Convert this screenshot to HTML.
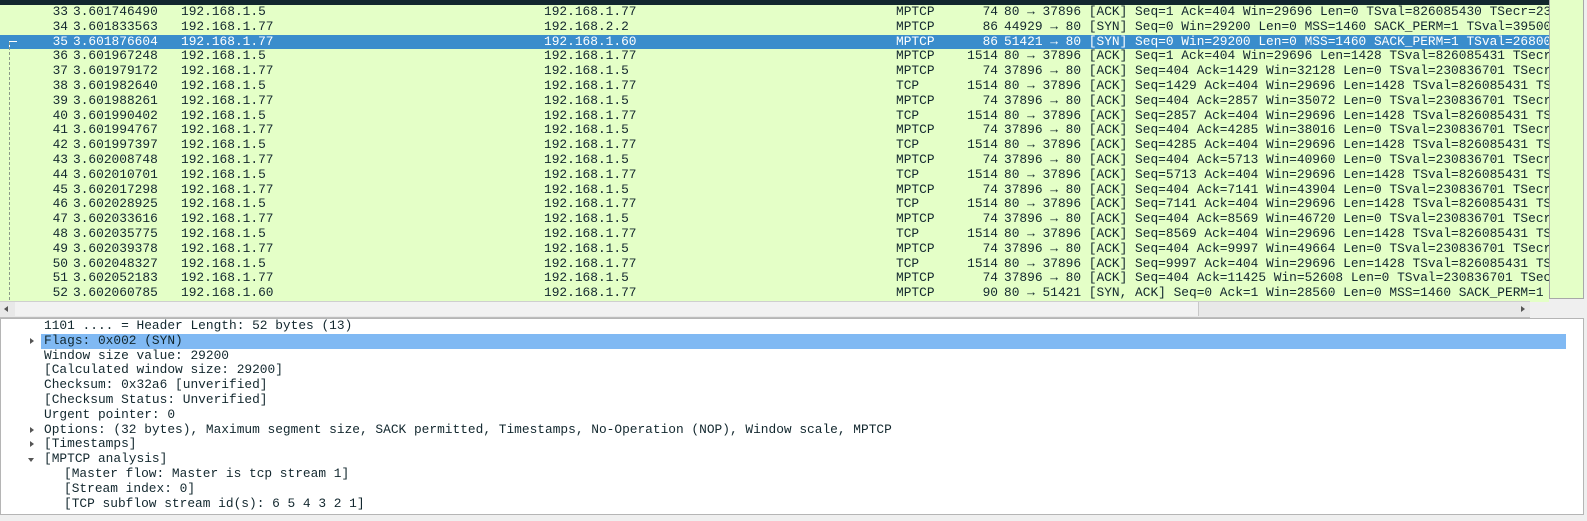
<!DOCTYPE html><html><head><style>
body{margin:0;width:1587px;height:521px;background:#efefef;position:relative;overflow:hidden;font-family:"Liberation Mono",monospace;font-size:12.85px;color:#12272e}
.top{position:absolute;left:0;top:0;width:1549px;height:302px;background:#e4ffc7;overflow:hidden}
.bar{position:absolute;left:0;top:0;width:1549px;height:5px;background:#12272e}
.r{position:absolute;left:0;width:1549px;height:14.8px;line-height:14.8px;white-space:pre}
.r span{position:absolute;top:0}
.sel{background:#3a8dcc;color:#fff}
.mini{position:absolute;left:1549px;top:0;width:33px;height:298px;background:#e4ffc7;border:1px solid #a8a8a8;border-top:none}
.hs{position:absolute;left:0;top:301px;width:1530px;height:15px;background:#e8e8e8;border-top:1px solid #cfcfcf;border-bottom:1px solid #bdbdbd}
.det{position:absolute;left:0;top:318px;width:1582px;height:195px;background:#fff;border:1px solid #b5b5b5}
.d{position:absolute;height:14.8px;line-height:14.8px;white-space:pre}
.tri{position:absolute;left:28px;width:0;height:0}
</style></head><body>
<div class="top">
<div class="bar"></div>
<div id="rows"></div>
<div style="position:absolute;left:9px;top:42px;width:0;height:258px;border-left:1px dashed #8a9a88"></div>
</div>
<div class="mini"></div>
<div class="hs">
<div style="position:absolute;left:15px;top:0;width:1183px;height:14px;background:#f2f2f2;border-right:1px solid #c8c8c8"></div>
<div style="position:absolute;left:4px;top:4px;border-right:4px solid #555;border-top:3px solid transparent;border-bottom:3px solid transparent"></div>
<div style="position:absolute;left:1521px;top:4px;border-left:4px solid #555;border-top:3px solid transparent;border-bottom:3px solid transparent"></div>
</div>
<div class="det" id="det"></div>
<script>
var rows=[
["33","3.601746490","192.168.1.5","192.168.1.77","MPTCP","74","80 → 37896 [ACK] Seq=1 Ack=404 Win=29696 Len=0 TSval=826085430 TSecr=230836701"],
["34","3.601833563","192.168.1.77","192.168.2.2","MPTCP","86","44929 → 80 [SYN] Seq=0 Win=29200 Len=0 MSS=1460 SACK_PERM=1 TSval=3950000"],
["35","3.601876604","192.168.1.77","192.168.1.60","MPTCP","86","51421 → 80 [SYN] Seq=0 Win=29200 Len=0 MSS=1460 SACK_PERM=1 TSval=2680000"],
["36","3.601967248","192.168.1.5","192.168.1.77","MPTCP","1514","80 → 37896 [ACK] Seq=1 Ack=404 Win=29696 Len=1428 TSval=826085431 TSecr"],
["37","3.601979172","192.168.1.77","192.168.1.5","MPTCP","74","37896 → 80 [ACK] Seq=404 Ack=1429 Win=32128 Len=0 TSval=230836701 TSecr"],
["38","3.601982640","192.168.1.5","192.168.1.77","TCP","1514","80 → 37896 [ACK] Seq=1429 Ack=404 Win=29696 Len=1428 TSval=826085431 TS"],
["39","3.601988261","192.168.1.77","192.168.1.5","MPTCP","74","37896 → 80 [ACK] Seq=404 Ack=2857 Win=35072 Len=0 TSval=230836701 TSecr"],
["40","3.601990402","192.168.1.5","192.168.1.77","TCP","1514","80 → 37896 [ACK] Seq=2857 Ack=404 Win=29696 Len=1428 TSval=826085431 TS"],
["41","3.601994767","192.168.1.77","192.168.1.5","MPTCP","74","37896 → 80 [ACK] Seq=404 Ack=4285 Win=38016 Len=0 TSval=230836701 TSecr"],
["42","3.601997397","192.168.1.5","192.168.1.77","TCP","1514","80 → 37896 [ACK] Seq=4285 Ack=404 Win=29696 Len=1428 TSval=826085431 TS"],
["43","3.602008748","192.168.1.77","192.168.1.5","MPTCP","74","37896 → 80 [ACK] Seq=404 Ack=5713 Win=40960 Len=0 TSval=230836701 TSecr"],
["44","3.602010701","192.168.1.5","192.168.1.77","TCP","1514","80 → 37896 [ACK] Seq=5713 Ack=404 Win=29696 Len=1428 TSval=826085431 TS"],
["45","3.602017298","192.168.1.77","192.168.1.5","MPTCP","74","37896 → 80 [ACK] Seq=404 Ack=7141 Win=43904 Len=0 TSval=230836701 TSecr"],
["46","3.602028925","192.168.1.5","192.168.1.77","TCP","1514","80 → 37896 [ACK] Seq=7141 Ack=404 Win=29696 Len=1428 TSval=826085431 TS"],
["47","3.602033616","192.168.1.77","192.168.1.5","MPTCP","74","37896 → 80 [ACK] Seq=404 Ack=8569 Win=46720 Len=0 TSval=230836701 TSecr"],
["48","3.602035775","192.168.1.5","192.168.1.77","TCP","1514","80 → 37896 [ACK] Seq=8569 Ack=404 Win=29696 Len=1428 TSval=826085431 TS"],
["49","3.602039378","192.168.1.77","192.168.1.5","MPTCP","74","37896 → 80 [ACK] Seq=404 Ack=9997 Win=49664 Len=0 TSval=230836701 TSecr"],
["50","3.602048327","192.168.1.5","192.168.1.77","TCP","1514","80 → 37896 [ACK] Seq=9997 Ack=404 Win=29696 Len=1428 TSval=826085431 TS"],
["51","3.602052183","192.168.1.77","192.168.1.5","MPTCP","74","37896 → 80 [ACK] Seq=404 Ack=11425 Win=52608 Len=0 TSval=230836701 TSecr"],
["52","3.602060785","192.168.1.60","192.168.1.77","MPTCP","90","80 → 51421 [SYN, ACK] Seq=0 Ack=1 Win=28560 Len=0 MSS=1460 SACK_PERM=1"]];
var h='';rows.forEach(function(r,i){var t=5+i*14.8;
h+='<div class="r'+(i==2?' sel':'')+'" style="top:'+t+'px">'+
'<span style="right:'+(1549-68)+'px">'+r[0]+'</span><span style="left:73px">'+r[1]+'</span><span style="left:181px">'+r[2]+'</span><span style="left:544px">'+r[3]+'</span><span style="left:896px">'+r[4]+'</span><span style="right:'+(1549-998)+'px">'+r[5]+'</span><span style="left:1004px">'+r[6]+'</span>'+
(i==2?'<span style="left:9px;top:6px;width:7px;height:8px;border-left:1px solid #fff;border-top:1px solid #fff"></span>':'')+'</div>';});
document.getElementById('rows').innerHTML=h;
var d=[[43,"1101 .... = Header Length: 52 bytes (13)",0],[43,"Flags: 0x002 (SYN)",1],[43,"Window size value: 29200",0],[43,"[Calculated window size: 29200]",0],[43,"Checksum: 0x32a6 [unverified]",0],[43,"[Checksum Status: Unverified]",0],[43,"Urgent pointer: 0",0],[43,"Options: (32 bytes), Maximum segment size, SACK permitted, Timestamps, No-Operation (NOP), Window scale, MPTCP",1],[43,"[Timestamps]",1],[43,"[MPTCP analysis]",2],[63,"[Master flow: Master is tcp stream 1]",0],[63,"[Stream index: 0]",0],[63,"[TCP subflow stream id(s): 6 5 4 3 2 1]",0]];
var g='<div style="position:absolute;left:40px;top:14.8px;width:1525px;height:14.8px;background:#80b9f3"></div>';
d.forEach(function(x,i){var t=i*14.8;g+='<div class="d" style="left:'+x[0]+'px;top:'+t+'px">'+x[1]+'</div>';
if(x[2]==1)g+='<div class="tri" style="left:29px;top:'+(t+4)+'px;border-left:4px solid #555;border-top:3.5px solid transparent;border-bottom:3.5px solid transparent"></div>';
if(x[2]==2)g+='<div class="tri" style="left:27px;top:'+(t+6)+'px;border-top:4px solid #555;border-left:3.5px solid transparent;border-right:3.5px solid transparent"></div>';});
document.getElementById('det').innerHTML=g;
</script>
</body></html>
